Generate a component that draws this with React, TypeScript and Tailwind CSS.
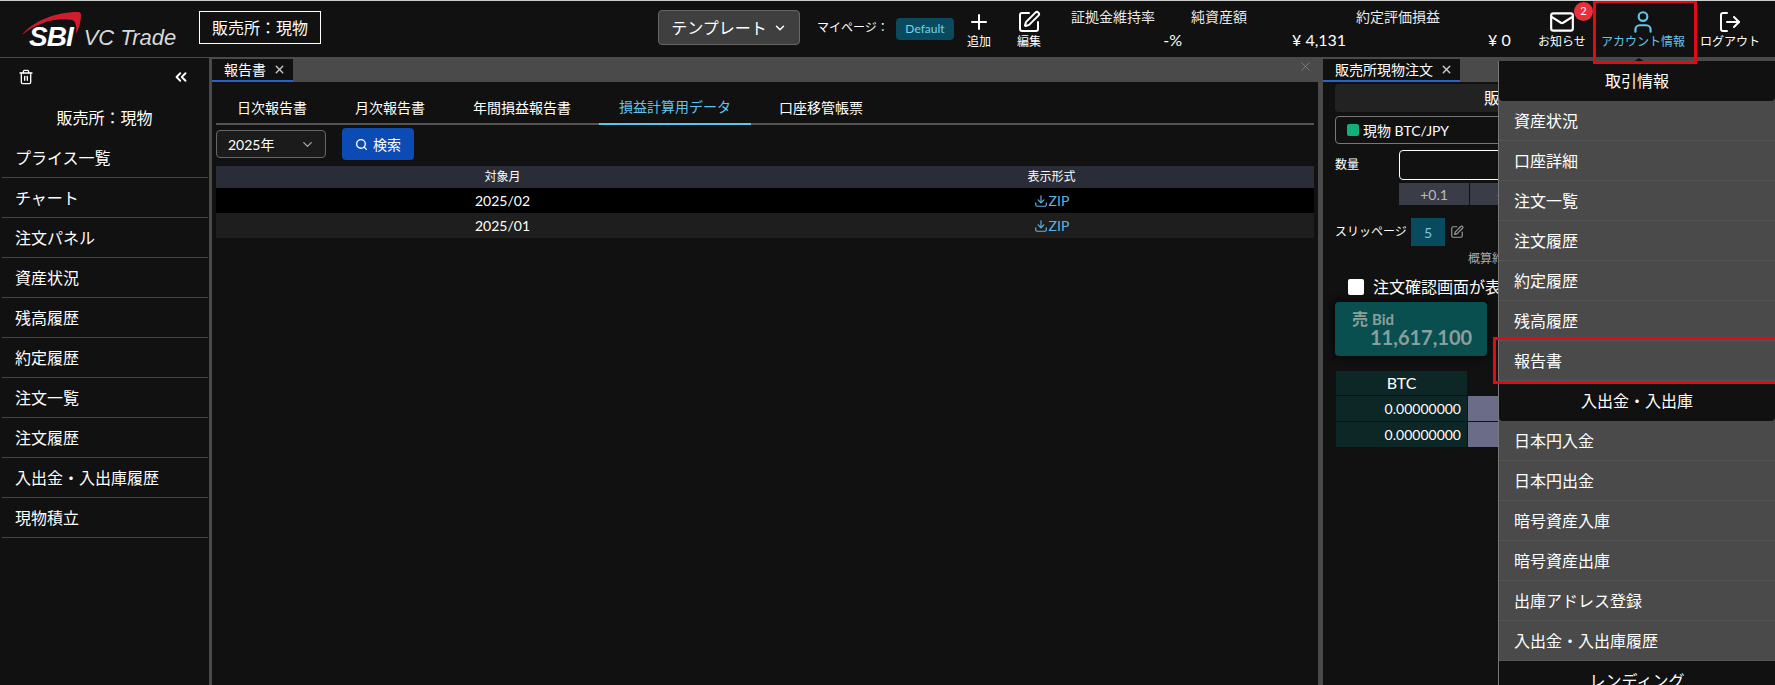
import { ChevronDown, ChevronsLeft, Download, LogOut, Mail, Plus, Search, SquarePen, Trash2, User, X } from 'lucide-react';

const sideItems = ['プライス一覧', 'チャート', '注文パネル', '資産状況', '残高履歴', '約定履歴', '注文一覧', '注文履歴', '入出金・入出庫履歴', '現物積立'];
const reportTabs = ['日次報告書', '月次報告書', '年間損益報告書', '損益計算用データ', '口座移管帳票'];
const tradeMenu = ['資産状況', '口座詳細', '注文一覧', '注文履歴', '約定履歴', '残高履歴', '報告書'];
const fundMenu = ['日本円入金', '日本円出金', '暗号資産入庫', '暗号資産出庫', '出庫アドレス登録', '入出金・入出庫履歴'];

const Logo = () => (
  <div className="relative w-[199px] shrink-0 h-full flex items-end pb-[8px] pl-[29px]">
    <svg className="absolute left-[20px] top-[10px]" width="64" height="26" viewBox="0 0 64 26">
      <path d="M2 24C12 11 34 1 58 1C60 1 61 2 61 4C61 11 59 17 56 23C57 16 56 10 52 9C36 6 16 12 2 24Z" fill="#d01c2c" />
    </svg>
    <span className="relative font-['Liberation_Sans',sans-serif] font-bold italic text-[28px] leading-[24px] tracking-[-1px] text-white">SBI</span>
    <span className="relative ml-[11px] font-['Liberation_Sans',sans-serif] italic text-[22px] leading-[22px] text-[#d8d8d8]">VC Trade</span>
  </div>
);

const HeaderIcon = ({ icon, label, className = 'text-white' }: { icon: React.ReactNode; label: string; className?: string }) => (
  <div className={`flex flex-col items-center pt-[8px] ${className}`}>
    <div className="h-[26px] flex items-center justify-center">{icon}</div>
    <span className="text-[12px] leading-[14px] whitespace-nowrap">{label}</span>
  </div>
);

const Header = () => (
  <header className="h-[56px] flex shrink-0 bg-[#111111]">
    <Logo />
    <div className="shrink-0 mt-[10px] w-[122px] h-[33px] border border-white flex items-center justify-center text-[16px] text-white">販売所：現物</div>
    <button className="shrink-0 ml-[337px] mt-[9px] w-[142px] h-[35px] bg-[#3f3f3f] border border-[#666666] rounded flex items-center justify-center gap-[6px] text-[16px] text-white">
      テンプレート
      <ChevronDown size={14} strokeWidth={2.5} />
    </button>
    <span className="shrink-0 ml-[17px] mt-[18px] w-[78px] text-[12px] leading-[18px] text-white whitespace-nowrap">マイページ：</span>
    <span className="shrink-0 ml-px mt-[17px] w-[58px] h-[22px] bg-[#0a4a5e] rounded-sm flex items-center justify-center text-[12px] text-[#72d2ea]">Default</span>
    <div className="shrink-0 ml-[13px] w-[24px] flex justify-center">
      <HeaderIcon icon={<Plus size={24} strokeWidth={2} />} label="追加" />
    </div>
    <div className="shrink-0 ml-[26px] w-[24px] flex justify-center">
      <HeaderIcon icon={<SquarePen size={24} strokeWidth={2} />} label="編集" />
    </div>
    <div className="shrink-0 ml-[30px] w-[85px] pt-[6px] flex flex-col text-[14px] leading-[20px] text-white">
      <span className="whitespace-nowrap text-[#e8e8e8]">証拠金維持率</span>
      <span className="mt-[3px] text-[16px] text-right translate-x-[26px]">-%</span>
    </div>
    <div className="shrink-0 ml-[35px] w-[56px] pt-[6px] flex flex-col text-[14px] leading-[20px] text-white">
      <span className="whitespace-nowrap text-[#e8e8e8]">純資産額</span>
      <span className="mt-[3px] text-[16px] whitespace-nowrap translate-x-[101px]">¥ 4,131</span>
    </div>
    <div className="shrink-0 ml-[109px] w-[84px] pt-[6px] flex flex-col text-[14px] leading-[20px] text-white">
      <span className="whitespace-nowrap text-[#e8e8e8]">約定評価損益</span>
      <span className="mt-[3px] text-[16px] whitespace-nowrap translate-x-[132px]">¥ 0</span>
    </div>
    <div className="shrink-0 ml-[92px] w-[60px] flex justify-center relative">
      <HeaderIcon icon={<Mail size={26} strokeWidth={2} />} label="お知らせ" />
      <span className="absolute left-[42px] top-[1px] w-[19px] h-[19px] rounded-full bg-[#e8303a] text-white text-[11px] flex items-center justify-center">2</span>
    </div>
    <div className="shrink-0 ml-[9px] w-[84px] flex justify-center">
      <HeaderIcon icon={<User size={26} strokeWidth={2} />} label="アカウント情報" className="text-[#62c4ec]" />
    </div>
    <div className="shrink-0 ml-[15px] w-[60px] flex justify-center">
      <HeaderIcon icon={<LogOut size={24} strokeWidth={2} />} label="ログアウト" />
    </div>
  </header>
);

const Sidebar = () => (
  <aside className="w-[209px] shrink-0 flex flex-col bg-[#111111] text-white">
    <div className="h-[38px] flex items-center justify-between pl-[18px] pr-[19px]">
      <Trash2 size={16} strokeWidth={2} />
      <ChevronsLeft size={18} strokeWidth={2.5} />
    </div>
    <div className="h-[42px] pt-px flex items-center justify-center text-[16px]">販売所：現物</div>
    {sideItems.map((item) => (
      <div key={item} className="ml-[2px] w-[206px] h-[40px] shrink-0 pl-[13px] flex items-center border-b border-[#444444] text-[16px]">
        {item}
      </div>
    ))}
  </aside>
);

const PanelTab = ({ label, width }: { label: string; width: string }) => (
  <div className={`${width} h-[23px] mt-px pl-[12px] bg-[#111111] border-b-2 border-[#2a62cc] flex items-center gap-[7px] text-[14px] text-white`}>
    {label}
    <X size={13} strokeWidth={2.5} className="text-[#cccccc]" />
  </div>
);

const ReportPanel = () => (
  <section className="w-[1106px] shrink-0 flex flex-col">
    <div className="h-[24px] bg-[#4a4a4a] flex justify-between">
      <PanelTab label="報告書" width="w-[81px]" />
      <X size={15} strokeWidth={1} className="mt-[1px] mr-[5px] text-[#999999]" />
    </div>
    <div className="flex-1 bg-[#111111] pl-[4px] pr-[4px] text-white">
      <nav className="h-[43px] flex gap-[8px] pl-px border-b-2 border-[#555555]">
        {reportTabs.map((tab) => (
          <div
            key={tab}
            className={tab === '損益計算用データ'
              ? 'h-[43px] pt-[7px] px-5 flex items-center text-[14px] text-[#62c4ec] border-b-2 border-[#62c4ec]'
              : 'h-[43px] pt-[7px] px-5 flex items-center text-[14px]'}
          >
            {tab}
          </div>
        ))}
      </nav>
      <div className="h-[41px] pb-[3px] flex items-center gap-[16px]">
        <div className="w-[110px] h-[28px] bg-[#1b1b1b] border border-[#666666] rounded-sm flex items-center justify-between pl-[11px] pr-[10px] text-[14px]">
          2025年
          <ChevronDown size={15} className="text-[#aaaaaa]" />
        </div>
        <button className="w-[72px] h-[32px] bg-[#0c4ab4] rounded flex items-center justify-center gap-[5px] text-[14px] text-white">
          <Search size={13} strokeWidth={2.5} />
          検索
        </button>
      </div>
      <div className="grid grid-cols-[573px_1fr] h-[22px] bg-[#2a2d38] items-center text-center text-[12px]">
        <span>対象月</span>
        <span>表示形式</span>
      </div>
      {['2025/02', '2025/01'].map((month, i) => (
        <div key={month} className={`grid grid-cols-[573px_1fr] h-[25px] items-center text-center text-[14px] ${i === 0 ? 'bg-black' : 'bg-[#1e1e1e]'}`}>
          <span>{month}</span>
          <span className="flex items-center justify-center gap-px text-[#5db4e4]">
            <Download size={14} strokeWidth={2} />
            ZIP
          </span>
        </div>
      ))}
    </div>
  </section>
);

const OrderPanel = () => (
  <section className="flex-1 min-w-0 flex flex-col">
    <div className="h-[24px] bg-[#4a4a4a] flex">
      <PanelTab label="販売所現物注文" width="w-[137px]" />
    </div>
    <div className="flex-1 bg-[#111111] pl-[12px] pt-[2px] text-white">
      <div className="h-[28px] bg-[#222222] rounded-sm flex items-center pl-[149px] text-[16px]">販売所</div>
      <div className="mt-[4px] h-[28px] border border-[#777777] rounded-sm flex items-center gap-[4px] pl-[11px] text-[14px]">
        <span className="w-[12px] h-[12px] rounded-[2px] bg-[#10b07a]" />
        現物 BTC/JPY
      </div>
      <div className="mt-[6px] flex">
        <span className="w-[64px] pt-[6px] text-[12px]">数量</span>
        <div className="flex-1">
          <div className="h-[30px] border border-white rounded-sm" />
          <div className="mt-[3px] flex gap-px">
            <div className="w-[70px] h-[22px] bg-[#3a3d48] flex items-center justify-center text-[14px] text-[#bbbbbb]">+0.1</div>
            <div className="w-[70px] h-[22px] bg-[#3a3d48] flex items-center justify-center text-[14px] text-[#bbbbbb]">+1</div>
          </div>
        </div>
      </div>
      <div className="mt-[13px] flex items-center">
        <span className="w-[76px] text-[12px]">スリッページ</span>
        <span className="w-[34px] h-[28px] bg-[#0a4a5e] flex items-center justify-center text-[14px] text-[#7fc4dc]">5</span>
        <SquarePen size={14} className="ml-[5px] text-[#999999]" />
      </div>
      <div className="mt-[4px] ml-[133px] w-fit h-[18px] text-[12px] text-[#aaaaaa]">概算約定代金</div>
      <div className="mt-[7px] flex items-center pl-[13px] text-[16px] whitespace-nowrap">
        <span className="w-[16px] h-[16px] bg-white rounded-[2px]" />
        <span className="ml-[9px]">注文確認画面が表示されます</span>
      </div>
      <div className="mt-[3px] w-[152px] h-[54px] bg-[#0a4f4f] rounded-sm shadow-[0_0_6px_3px_#0a0a0a] pl-[17px] pt-[8px] text-[#8a9f9c] font-bold">
        <div className="flex items-baseline gap-[4px] text-[16px] leading-[18px]">
          売<span className="text-[15px]">Bid</span>
        </div>
        <div className="pl-[18px] text-[20px] leading-[19px]">11,617,100</div>
      </div>
      <div className="mt-[15px] w-[131px] ml-px">
        <div className="h-[24px] bg-[#0d2626] flex items-center justify-center text-[16px]">BTC</div>
        {['0.00000000', '0.00000000'].map((v, i) => (
          <div key={i} className="relative mt-px h-[25px] bg-[#0d2626] flex items-center justify-end pr-[6px] text-[14px]">
            {v}
            <span className="absolute left-[132px] top-0 w-[40px] h-[25px] bg-[#6a6c88]" />
          </div>
        ))}
      </div>
    </div>
  </section>
);

const MenuHeader = ({ label }: { label: string }) => (
  <div className="h-[40px] shrink-0 bg-[#111111] rounded-b flex items-center justify-center text-[16px]">{label}</div>
);

const MenuRow = ({ label }: { label: string }) => (
  <div className="h-[40px] shrink-0 pl-[15px] flex items-center border-b border-[#555555] text-[16px]">{label}</div>
);

export default function App() {
  return (
    <div className="relative w-full h-[685px] overflow-hidden flex flex-col border-t border-[#cccccc] bg-[#111111] font-['Lato','Noto_Sans_CJK_JP',sans-serif]">
      <Header />
      <div className="h-px bg-[#4a4a4a] shrink-0" />
      <div className="flex-1 min-h-0 flex">
        <Sidebar />
        <div className="w-[3px] shrink-0 bg-[#4a4a4a]" />
        <ReportPanel />
        <div className="w-[5px] shrink-0 bg-[#4a4a4a]" />
        <OrderPanel />
      </div>

      {/* account dropdown */}
      <div className="absolute left-[1498px] top-[60px] right-0 bottom-0 flex flex-col overflow-hidden bg-[#4a4a4a] border-l border-[#777777] text-white">
        <MenuHeader label="取引情報" />
        {tradeMenu.map((m) => <MenuRow key={m} label={m} />)}
        <MenuHeader label="入出金・入出庫" />
        {fundMenu.map((m) => <MenuRow key={m} label={m} />)}
        <MenuHeader label="レンディング" />
      </div>
      <span className="absolute left-[1633px] top-[57px] w-0 h-0 border-x-[6px] border-x-transparent border-b-[4px] border-b-[#111111]" />

      {/* highlight boxes */}
      <div className="absolute left-[1593px] -top-px w-[104px] h-[64px] border-[3px] border-[#e00b16] pointer-events-none" />
      <div className="absolute left-[1493px] top-[336px] -right-[6px] h-[47px] border-[3px] border-[#e00b16] pointer-events-none" />
    </div>
  );
}
